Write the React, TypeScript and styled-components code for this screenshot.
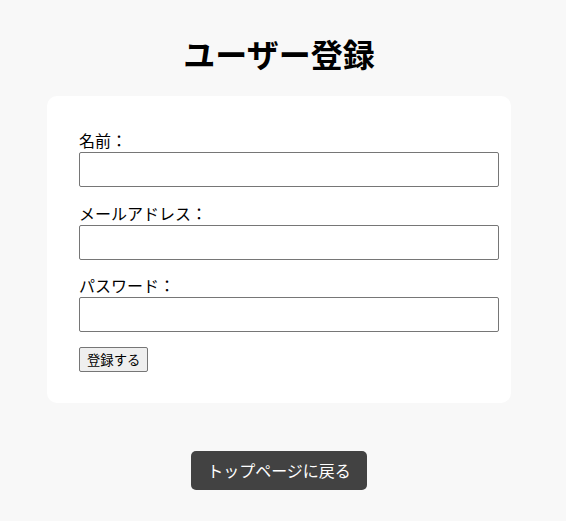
import {FC} from 'react';
import styled, {createGlobalStyle} from 'styled-components';

const GlobalStyle = createGlobalStyle`
  html, body {
    margin: 0;
    padding: 0;
    background: #f8f8f8;
  }
  body {
    font-family: "Noto Sans CJK JP", "Noto Sans", sans-serif;
    color: #000;
  }
`;

const Page = styled.div`
  width: 558px;
  display: flex;
  flex-direction: column;
  align-items: center;
`;

const Title = styled.h1`
  margin: 30px 0 20px;
  font-size: 32px;
  line-height: 46px;
  font-weight: 700;
`;

const Card = styled.form`
  width: 464px;
  box-sizing: border-box;
  padding: 33px 32px 31.5px;
  background: #fff;
  border-radius: 10px;
`;

const Field = styled.div`
  margin-bottom: 14.5px;
`;

const Label = styled.label`
  display: block;
  font-size: 16px;
  line-height: 23px;
`;

const Input = styled.input`
  display: block;
  width: 100%;
  height: 15px;
  padding: 9px;
  margin: 0;
  font-size: 16px;
  border: 1px solid #767676;
  border-radius: 2px;
  background: #fff;
`;

const SubmitButton = styled.button`
  display: block;
  height: 25px;
  padding: 0 7px;
  font-family: inherit;
  font-size: 13.33px;
  line-height: 23px;
  color: #000;
  background: #efefef;
  border: 1px solid #767676;
  border-radius: 2px;
`;

const BackButton = styled.a`
  display: block;
  margin-top: 47.5px;
  padding: 8px 16px;
  font-size: 16px;
  line-height: 23px;
  color: #fff;
  background: #424242;
  border-radius: 5px;
  text-decoration: none;
`;

const App: FC = () => {
  return (
    <>
      <GlobalStyle />
      <Page>
        <Title>ユーザー登録</Title>
        <Card onSubmit={(e) => e.preventDefault()}>
          <Field>
            <Label htmlFor='name'>名前：</Label>
            <Input id='name' type='text' />
          </Field>
          <Field>
            <Label htmlFor='email'>メールアドレス：</Label>
            <Input id='email' type='email' />
          </Field>
          <Field>
            <Label htmlFor='password'>パスワード：</Label>
            <Input id='password' type='password' />
          </Field>
          <SubmitButton type='submit'>登録する</SubmitButton>
        </Card>
        <BackButton href='#'>トップページに戻る</BackButton>
      </Page>
    </>
  );
};

export default App;
